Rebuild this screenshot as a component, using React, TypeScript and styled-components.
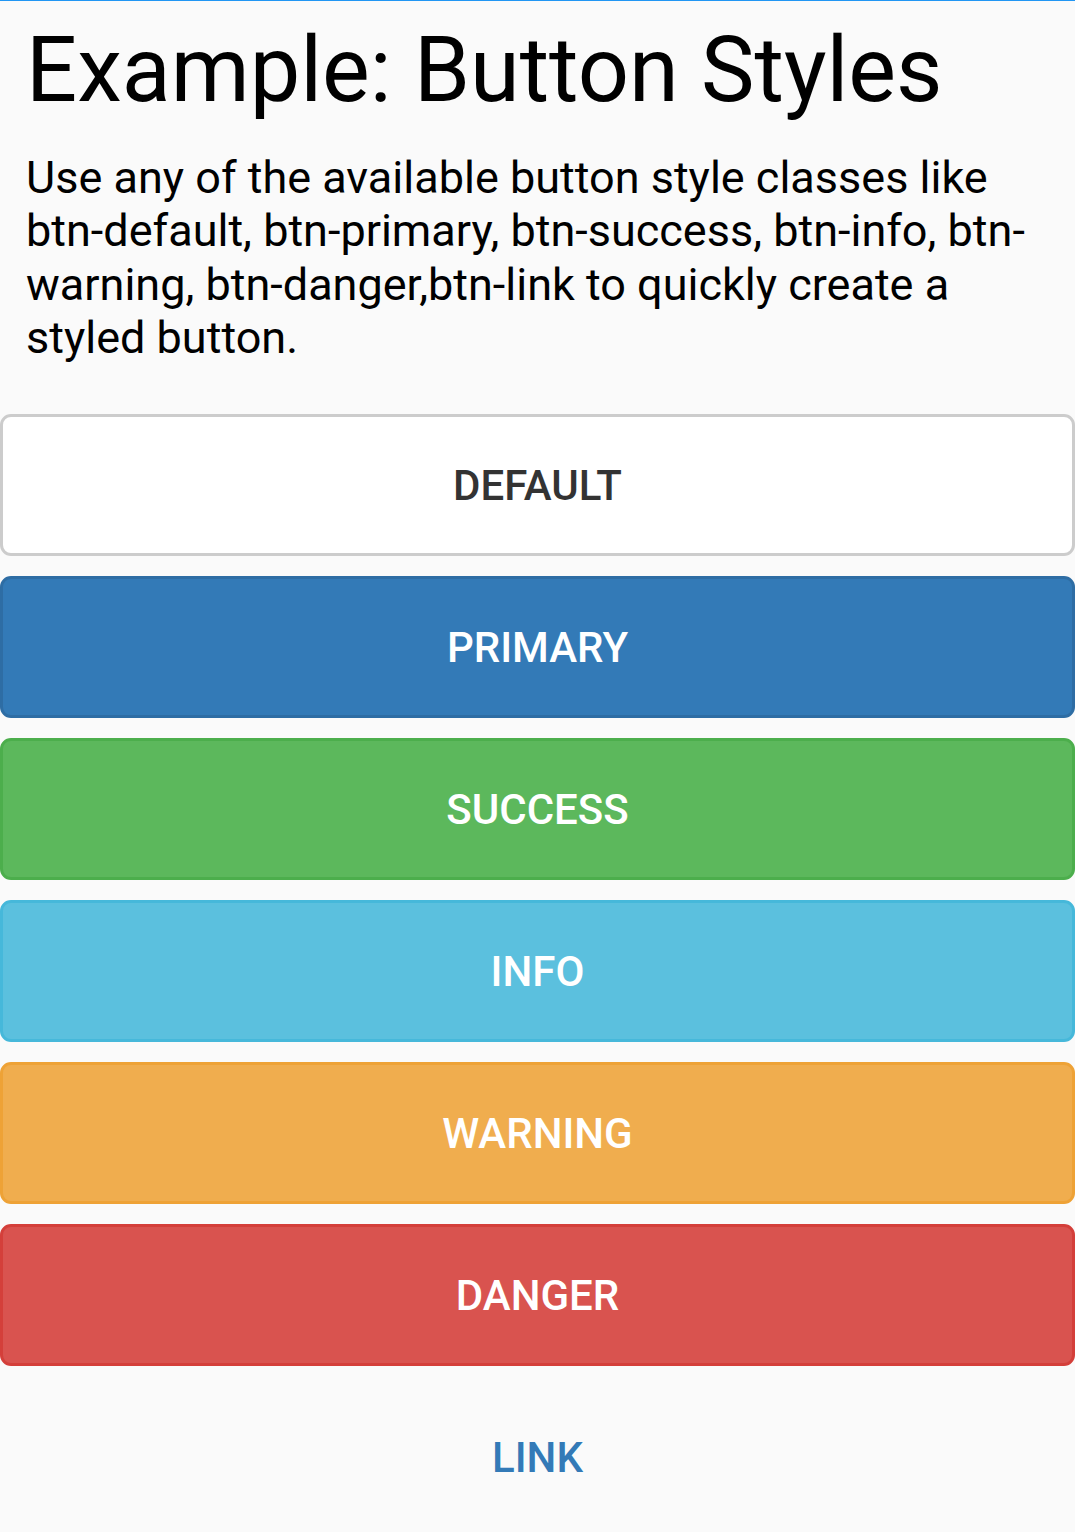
import React from "react";
import styled, { createGlobalStyle } from "styled-components";

const Global = createGlobalStyle`
  html, body {
    margin: 0;
    padding: 0;
    background: #fafafa;
  }
  body {
    font-family: Roboto, "Noto Sans", "Liberation Sans", sans-serif;
    color: #000;
  }
  * { box-sizing: border-box; }
`;

const Page = styled.div`
  border-top: 1px solid #2196f3;
  background: #fafafa;
  min-height: 1532px;
`;

const Title = styled.h1`
  margin: 17px 0 0;
  padding: 0 28px 0 26px;
  font-size: 90px;
  font-weight: 400;
  line-height: normal;
  letter-spacing: 0;
`;

const Lead = styled.p`
  margin: 28px 0 0;
  padding: 0 28px 0 26px;
  font-size: 45px;
  line-height: 53.3px;
  font-weight: 400;
`;

const ButtonList = styled.div`
  display: flex;
  flex-direction: column;
  gap: 20px;
  margin-top: 50px;
`;

type Variant = "default" | "primary" | "success" | "info" | "warning" | "danger" | "link";

const palette: Record<Variant, { bg: string; border: string; color: string }> = {
  default: { bg: "#ffffff", border: "#cccccc", color: "#333333" },
  primary: { bg: "#337ab7", border: "#2e6da4", color: "#ffffff" },
  success: { bg: "#5cb85c", border: "#4cae4c", color: "#ffffff" },
  info: { bg: "#5bc0de", border: "#46b8da", color: "#ffffff" },
  warning: { bg: "#f0ad4e", border: "#eea236", color: "#ffffff" },
  danger: { bg: "#d9534f", border: "#d43f3a", color: "#ffffff" },
  link: { bg: "transparent", border: "transparent", color: "#337ab7" },
};

const Btn = styled.button<{ $variant: Variant }>`
  display: flex;
  align-items: center;
  justify-content: center;
  width: 100%;
  height: 142px;
  margin: 0;
  padding: 0;
  border-radius: 11px;
  border: 3px solid ${(p) => palette[p.$variant].border};
  background: ${(p) => palette[p.$variant].bg};
  color: ${(p) => palette[p.$variant].color};
  font-family: Roboto, "Noto Sans", "Liberation Sans", sans-serif;
  font-size: 42px;
  font-weight: 500;
  text-transform: uppercase;
  cursor: pointer;
`;

const buttons: { label: string; variant: Variant }[] = [
  { label: "Default", variant: "default" },
  { label: "Primary", variant: "primary" },
  { label: "Success", variant: "success" },
  { label: "Info", variant: "info" },
  { label: "Warning", variant: "warning" },
  { label: "Danger", variant: "danger" },
  { label: "Link", variant: "link" },
];

export default function App() {
  return (
    <>
      <Global />
      <Page>
        <Title>Example: Button Styles</Title>
        <Lead>
          Use any of the available button style classes like btn-default, btn-primary, btn-success,
          btn-info, btn-warning, btn-danger,btn-link to quickly create a styled button.
        </Lead>
        <ButtonList>
          {buttons.map((b) => (
            <Btn key={b.label} $variant={b.variant}>
              {b.label}
            </Btn>
          ))}
        </ButtonList>
      </Page>
    </>
  );
}
